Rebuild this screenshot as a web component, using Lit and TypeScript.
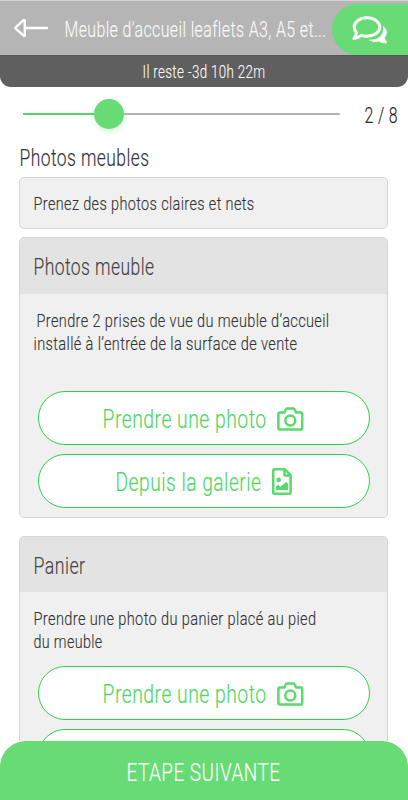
import { LitElement, html, css } from "lit";
import { customElement } from "lit/decorators.js";

// Narrow lettering: each line is set to its own measured width.
const line = (text: string, width: number, size: number, cls = "") => html`
  <svg class="line ${cls}" width=${width + 2} height="24" role="text">
    <text x="0.5" y=${12 + size * 0.355} font-size=${size} textLength=${width} lengthAdjust="spacingAndGlyphs">${text}</text>
  </svg>`;

const camera = html`<svg class="icon" width="27" height="24" viewBox="0 0 27 24">
  <path d="M2.7 5.4H7.6L8.7 2.6Q9.1 1.5 10.2 1.5H16.3Q17.4 1.5 17.8 2.6L18.9 5.4H23.8Q25.2 5.4 25.2 6.8V21.2Q25.2 22.5 23.8 22.5H2.7Q1.4 22.5 1.4 21.2V6.8Q1.4 5.4 2.7 5.4Z"/>
  <circle cx="13.3" cy="13.6" r="5"/></svg>`;

const picture = html`<svg class="icon" width="20" height="27" viewBox="0 0 20 27">
  <path d="M2.4 1.3H12.8L18.6 7.1V24.2Q18.6 25.7 17.2 25.7H2.7Q1.2 25.7 1.2 24.2V2.6Q1.2 1.3 2.4 1.3Z"/>
  <path d="M12.5 1.5V7.5H18.5"/>
  <circle class="solid" cx="6.6" cy="11.9" r="2.3"/>
  <path class="solid" d="M4 21.9V18.6L6.2 16.6L8.4 18.7L14 13.9L16.2 15.8V21.9Z"/></svg>`;

@customElement("app-root")
export class AppRoot extends LitElement {
  static styles = css`
    :host { display: block; height: 800px; overflow: hidden; background: #fff;
      font-family: Roboto, "Liberation Sans", sans-serif; font-weight: 300; color: #333; }
    * { box-sizing: border-box; }
    .page { height: 800px; display: flex; flex-direction: column; }
    svg { display: block; flex: none; overflow: visible; }
    .line text { fill: currentColor; stroke: currentColor; stroke-width: 0.15px; letter-spacing: 0.025em; }
    .top { height: 55px; flex: none; display: flex; align-items: center; background: #b5b5b5; border-top: 1px solid #d2d4d2; padding-left: 14px; color: #fafafa; }
    .title { margin-left: 16px; margin-top: 1px; }
    .chat { margin-left: auto; margin-top: 3px; width: 76px; height: 51px; border-radius: 26px 0 0 26px; background: #67dc75; padding: 12px 0 0 20px; }
    .timer { height: 32px; flex: none; background: #5f5f5f; border-top: 1px solid #555; border-radius: 0 0 11px 11px; display: flex; justify-content: center; padding: 4px 0 0 0; color: #fafafa; }
    .progress { height: 54px; flex: none; display: flex; align-items: center; padding-left: 23px; }
    .track { width: 317px; height: 2px; background: #b2b2b2; border-radius: 1px; display: flex; align-items: center; }
    .done { width: 71px; height: 2px; background: #4fd663; }
    .knob { width: 30px; height: 30px; border-radius: 50%; background: #67dc75; box-shadow: 0 3px 5px #67dc7540; flex: none; margin-top: -1px; }
    .count { margin: 2px 0 0 24px; color: #222; }
    .body { flex: 1; min-height: 0; overflow: hidden; padding: 5px 20px 0 19px; }
    .heading { margin-bottom: 7px; }
    .card { border: 1px solid #d5d5d5; border-radius: 5px; background: #f0f0f0; width: 369px; overflow: hidden; }
    .note { height: 52px; padding: 13px 0 0 13px; margin-bottom: 8px; }
    .head { height: 56px; background: #e3e3e3; padding: 17px 0 0 13px; color: #444; }
    .first { height: 281px; margin-bottom: 18px; }
    .second { height: 281px; }
    .second .head { height: 55px; }
    .copy { padding: 14px 0 0 13px; }
    .copy .line { height: 23px; }
    .indent { margin-left: 3px; }
    .first .copy { height: 97px; }
    .second .copy { height: 74px; }
    .btn { width: 332px; height: 54px; margin: 0 0 9px 18px; border: 1px solid #2fce47; border-radius: 27px; background: #fff; color: #4fd663; display: flex; align-items: center; justify-content: center; gap: 9px; padding-right: 2px; }
    .btn .line { margin-top: 2px; }
    .icon { fill: none; stroke: #5ad96c; stroke-width: 2.5; stroke-linejoin: round; margin-top: 1px; }
    .solid { fill: #5ad96c; stroke: none; }
    .next { height: 59px; flex: none; background: #67dc75; border-radius: 26px 26px 0 0; display: flex; justify-content: center; padding: 19px 1px 0 0; color: #fff; }
    .white { fill: none; stroke: #fff; stroke-width: 2.4; stroke-linejoin: round; stroke-linecap: round; }
    .bubble { stroke-width: 3; }
    .fillw { fill: #fff; stroke: #fff; stroke-width: 0.8; stroke-linejoin: round; }
  `;

  private shoot() {
    return html`<div class="btn">${line("Prendre une photo", 164, 25)}${camera}</div>`;
  }

  render() {
    return html`<div class="page">
      <div class="top">
        <svg width="34" height="20" viewBox="0 0 34 20"><path class="white" d="M10.8 2.6V17.4Q10.6 18.4 9.7 17.6L1.6 10.6Q1 10 1.6 9.4L9.3 2.3Q10.5 1.3 10.8 2.6ZM11 10H33"/></svg>
        ${line("Meuble d’accueil leaflets A3, A5 et...", 262, 22, "title")}
        <div class="chat"><svg width="36" height="28" viewBox="0 0 36 28">
          <path class="white bubble" d="M15 1.8C22 1.8 27.8 5.8 27.8 11S22 20.2 15 20.2Q12 20.2 9.3 19.4Q5.7 22.4 1.9 22.4Q4.4 19.7 4.4 16.6Q2.2 14.2 2.2 11C2.2 5.8 8 1.8 15 1.8Z"/>
          <path class="fillw" d="M31.5 10.4Q34.6 13.3 34.4 16.9Q34.2 19.6 32.3 21.7Q32.8 24 34.6 25.7Q35 27 33.5 27Q29.5 27 26.6 25Q21.8 26.4 17.5 24.2Q27.8 24.2 30.6 17.4Q32 14 31.5 10.4Z"/></svg></div>
      </div>
      <div class="timer">${line("Il reste -3d 10h 22m", 123, 18)}</div>
      <div class="progress"><div class="track"><div class="done"></div><div class="knob"></div></div>${line("2 / 8", 33.5, 21.5, "count")}</div>
      <div class="body">
        <div class="heading">${line("Photos meubles", 130, 23)}</div>
        <div class="card note">${line("Prenez des photos claires et nets", 221, 19)}</div>
        <div class="card first">
          <div class="head">${line("Photos meuble", 121, 23)}</div>
          <div class="copy">${line("Prendre 2 prises de vue du meuble d’accueil", 293, 19, "indent")}${line("installé à l’entrée de la surface de vente", 264, 19)}</div>
          ${this.shoot()}
          <div class="btn">${line("Depuis la galerie", 146, 25)}${picture}</div>
        </div>
        <div class="card second">
          <div class="head">${line("Panier", 52, 23)}</div>
          <div class="copy">${line("Prendre une photo du panier placé au pied", 283, 19)}${line("du meuble", 69, 19)}</div>
          ${this.shoot()}
          <div class="btn"></div>
        </div>
      </div>
      <div class="next">${line("ETAPE SUIVANTE", 154, 26.5)}</div>
    </div>`;
  }
}
